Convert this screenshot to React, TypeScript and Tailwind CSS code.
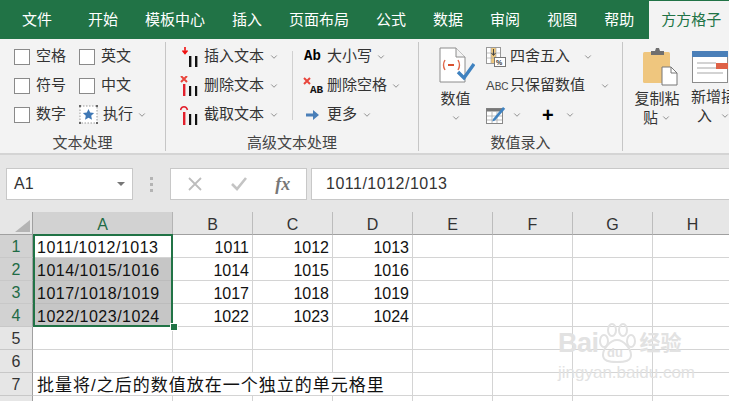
import { ChevronDown } from "lucide-react";

const FONT = '"Liberation Sans", "Noto Sans CJK SC", sans-serif';

const TABS = ["开始", "模板中心", "插入", "页面布局", "公式", "数据", "审阅", "视图", "帮助"];
const COLS = ["B", "C", "D", "E", "F", "G", "H"];

const ROWS = [
  { a: "1011/1012/1013", b: "1011", c: "1012", d: "1013" },
  { a: "1014/1015/1016", b: "1014", c: "1015", d: "1016" },
  { a: "1017/1018/1019", b: "1017", c: "1018", d: "1019" },
  { a: "1022/1023/1024", b: "1022", c: "1023", d: "1024" },
  { a: "", b: "", c: "", d: "" },
  { a: "", b: "", c: "", d: "" },
  { a: "批量将/之后的数值放在一个独立的单元格里", b: "", c: "", d: "" },
  { a: "", b: "", c: "", d: "" },
];

function Chev({ className = "" }: { className?: string }) {
  return <ChevronDown size={10} strokeWidth={1.5} className={`text-[#555] shrink-0 ${className}`} />;
}

function Check({ label }: { label: string }) {
  return (
    <div className="flex items-center h-[29px] gap-[6px]">
      <div className="w-4 h-4 border border-[#8a8a8a] bg-white" />
      <span>{label}</span>
    </div>
  );
}

function InsertIcon() {
  return (
    <svg width="20" height="20" viewBox="0 0 20 20" className="shrink-0">
      <path d="M5 0v6M2.500 3.500L5 6.500l2.500-3" stroke="#f01010" strokeWidth="1.6" fill="none" />
      <rect x="9" y="9" width="2.4" height="11" fill="#111" />
      <rect x="15" y="9" width="2.4" height="11" fill="#111" />
    </svg>
  );
}

function DeleteIcon() {
  return (
    <svg width="20" height="20" viewBox="0 0 20 20" className="shrink-0">
      <path d="M1 0l6 6M7 0L1 6" stroke="#e8453c" strokeWidth="2" />
      <rect x="3" y="8" width="2.4" height="12" fill="#e2202c" />
      <rect x="9" y="10" width="2.2" height="10" fill="#111" />
      <rect x="15" y="10" width="2.2" height="10" fill="#111" />
    </svg>
  );
}

function CutIcon() {
  return (
    <svg width="20" height="20" viewBox="0 0 20 20" className="shrink-0">
      <path d="M0.500 5C1.500 0.500 6.500 0.500 7.500 5" stroke="#e2202c" strokeWidth="1.5" fill="none" />
      <rect x="3" y="7" width="2.4" height="13" fill="#e2202c" />
      <rect x="9" y="9" width="2.2" height="11" fill="#111" />
      <rect x="15" y="9" width="2.2" height="11" fill="#111" />
    </svg>
  );
}

function StarIcon() {
  return (
    <svg width="19" height="19" viewBox="0 0 19 19" className="shrink-0">
      <rect x="1" y="1" width="17" height="17" fill="#fff" stroke="#999" strokeDasharray="1.5 1.5" />
      <rect x="0" y="0" width="2" height="2" fill="#666" />
      <rect x="17" y="0" width="2" height="2" fill="#666" />
      <rect x="0" y="17" width="2" height="2" fill="#666" />
      <rect x="17" y="17" width="2" height="2" fill="#666" />
      <path d="M9.500 4l1.700 3.600 3.900.5-2.900 2.700.8 3.900-3.500-2-3.500 2 .8-3.900-2.900-2.700 3.900-.5z" fill="#3f78b5" />
    </svg>
  );
}

function ValueIcon() {
  return (
    <svg width="36" height="36" viewBox="0 0 36 36" className="shrink-0 ml-[3px]">
      <path d="M1 1h16l9 9v25H1z" fill="#fff" stroke="#8c8c8c" />
      <path d="M17 1v9h9" fill="#f3f3f3" stroke="#8c8c8c" />
      <path d="M6 13q-3 5 0 10M19 13q3 5 0 10" stroke="#e0684b" strokeWidth="1.4" fill="none" />
      <path d="M9 18h6" stroke="#d9502e" strokeWidth="2" />
      <path d="M19 25l6 6L35 17" stroke="#3f82c0" strokeWidth="3.4" fill="none" />
    </svg>
  );
}

function RoundIcon() {
  return (
    <svg width="20" height="20" viewBox="0 0 20 20" className="shrink-0">
      <rect x="0.500" y="0.500" width="14" height="16" fill="#fff" stroke="#999" />
      <rect x="5" y="1" width="5" height="15" fill="#f0c87c" />
      <path d="M5 1v15M10 1v15M1 6h13M1 11h13" stroke="#aaa" strokeWidth="0.7" />
      <path d="M7.500 2v6M5.500 6l2 2.500 2-2.500" stroke="#444" strokeWidth="1" fill="none" />
      <rect x="8.500" y="10.500" width="11" height="9" fill="#fff" stroke="#777" />
      <text x="10" y="18" fontSize="7" fontWeight="700" fill="#333" fontFamily="Liberation Sans">%</text>
    </svg>
  );
}

function TableEditIcon() {
  return (
    <svg width="20" height="20" viewBox="0 0 20 20" className="shrink-0">
      <rect x="0.500" y="3.500" width="16" height="15" fill="#fff" stroke="#888" />
      <rect x="0.500" y="3.500" width="16" height="3" fill="#777" />
      <path d="M6 7v11M11 7v11M1 11h15M1 15h15" stroke="#aaa" strokeWidth="0.8" />
      <path d="M7 14L17 2l2.200 1.800L9 15.600l-2.600.8z" fill="#3f82c0" />
    </svg>
  );
}

function PasteIcon() {
  return (
    <svg width="36" height="38" viewBox="0 0 36 38" className="shrink-0 ml-[8px]">
      <rect x="0" y="4" width="27" height="31" rx="1.5" fill="#efc67e" />
      <path d="M8 7V3h4l1-3h3l1 3h4v4z" fill="#6f6f6f" />
      <path d="M19 19h9l6 6v12H19z" fill="#fff" stroke="#777" />
      <path d="M28 19v6h6" fill="none" stroke="#777" />
    </svg>
  );
}

function InsertRowIcon() {
  return (
    <svg width="36" height="32" viewBox="0 0 36 32" className="shrink-0 ml-[1px]">
      <rect x="0.500" y="0.500" width="35" height="31" fill="#fff" stroke="#8c8c8c" />
      <rect x="0" y="0" width="36" height="6" fill="#4a7fb8" />
      <path d="M5 12h19M5 17h19M5 22h26" stroke="#a8a8a8" strokeWidth="1.2" />
      <rect x="24" y="12" width="12" height="6" fill="#de6247" />
    </svg>
  );
}

function Group({ label, className, children }: { label: string; className: string; children: React.ReactNode }) {
  return (
    <div className={`flex flex-col shrink-0 border-r border-[#c6c6c6] ${className}`}>
      <div className="flex h-[87px]">{children}</div>
      <div className="mt-[4px] h-[20px] leading-[20px] text-center text-[#444]">{label}</div>
    </div>
  );
}

function Ribbon() {
  return (
    <div className="flex h-[116px] pt-[3px] pb-[2px] bg-[#f3f3f3] border-b-2 border-[#d4d4d4] overflow-hidden text-[15px] text-[#333]">
      <Group label="文本处理" className="w-[166px]">
        <div className="flex flex-col pl-[14px] w-[79px]">
          <Check label="空格" />
          <Check label="符号" />
          <Check label="数字" />
        </div>
        <div className="flex flex-col">
          <Check label="英文" />
          <Check label="中文" />
          <div className="flex items-center h-[29px]">
            <StarIcon />
            <span className="ml-[5px]">执行</span>
            <Chev className="ml-[4px]" />
          </div>
        </div>
      </Group>

      <Group label="高级文本处理" className="w-[253px]">
        <div className="flex flex-col pl-[14px] w-[126px] shrink-0">
          <div className="flex items-center h-[29px] gap-[4px]"><InsertIcon /><span>插入文本</span><Chev className="ml-[1px]" /></div>
          <div className="flex items-center h-[29px] gap-[4px]"><DeleteIcon /><span>删除文本</span><Chev className="ml-[1px]" /></div>
          <div className="flex items-center h-[29px] gap-[4px]"><CutIcon /><span>截取文本</span><Chev className="ml-[1px]" /></div>
        </div>
        <div className="w-px h-[69px] self-center bg-[#d0d0d0] shrink-0" />
        <div className="flex flex-col pl-[10px]">
          <div className="flex items-center h-[29px]">
            <span className="w-[23px] ml-[1px] text-[14px] font-bold text-black" style={{ fontFamily: '"Liberation Mono", monospace' }}>Ab</span>
            <span>大小写</span>
            <Chev className="ml-[4px]" />
          </div>
          <div className="flex items-center h-[29px] relative">
            <svg width="24" height="20" viewBox="0 0 24 20" className="shrink-0">
              <path d="M1 2l6 6M7 2L1 8" stroke="#e8453c" strokeWidth="2" />
              <text x="7" y="17" fontSize="11" fontWeight="700" fill="#111" fontFamily="Liberation Mono">AB</text>
            </svg>
            <span>删除空格</span>
            <Chev className="ml-[4px]" />
          </div>
          <div className="flex items-center h-[29px]">
            <svg width="24" height="14" viewBox="0 0 24 14" className="shrink-0">
              <path d="M3 5.500h7V2l6 5-6 5V8.500H3z" fill="#4a7fb8" />
            </svg>
            <span>更多</span>
            <Chev className="ml-[5px]" />
          </div>
        </div>
      </Group>

      <Group label="数值录入" className="w-[204px]">
        <div className="flex flex-col items-center w-[67px] pl-[6px] pt-[5px]">
          <ValueIcon />
          <span className="mt-[6px] leading-[20px]">数值</span>
          <Chev className="mt-[4px]" />
        </div>
        <div className="flex flex-col">
          <div className="flex items-center h-[29px] gap-[4px]"><RoundIcon /><span>四舍五入</span><Chev className="ml-[9px]" /></div>
          <div className="flex items-center h-[29px] gap-[4px]">
            <span className="w-[20px] text-[13px] text-[#444] whitespace-nowrap">A<span className="text-[10px]">BC</span></span>
            <span>只保留数值</span>
            <Chev className="ml-[11px]" />
          </div>
          <div className="flex items-center h-[29px]">
            <TableEditIcon />
            <Chev className="ml-[6px]" />
            <span className="ml-[20px] w-[14px] text-[20px] font-bold text-black leading-none">+</span>
            <Chev className="ml-[9px]" />
          </div>
        </div>
      </Group>

      <div className="flex">
        <div className="flex flex-col items-center w-[65px] pt-[6px] pl-[3px] leading-[19px] shrink-0">
          <PasteIcon />
          <span className="mt-[3px] whitespace-nowrap">复制粘</span>
          <span className="flex items-center">贴<Chev className="ml-[3px]" /></span>
        </div>
        <div className="flex flex-col w-[45px] pt-[9px] pl-[3px] leading-[19px] shrink-0">
          <InsertRowIcon />
          <span className="mt-[4px] whitespace-nowrap">新增插</span>
          <span className="flex items-center pl-[6px]">入<Chev className="ml-[8px]" /></span>
        </div>
      </div>
    </div>
  );
}

function FormulaBar() {
  return (
    <div className="flex items-center h-[57px] pt-[1px] pl-[6px] bg-[#e6e6e6] overflow-hidden">
      <div className="flex items-center justify-between shrink-0 w-[127px] h-[32px] pl-[7px] pr-[7px] bg-white border border-[#c8c8c8] text-[16px] text-[#333]">
        A1
        <div className="w-0 h-0 border-x-[4px] border-x-transparent border-t-[4px] border-t-[#777]" />
      </div>
      <div className="flex flex-col shrink-0 gap-[3px] ml-[17px] mr-[17px]">
        <div className="w-[3px] h-[3px] bg-[#b4b4b4]" />
        <div className="w-[3px] h-[3px] bg-[#b4b4b4]" />
        <div className="w-[3px] h-[3px] bg-[#b4b4b4]" />
      </div>
      <div className="flex items-center justify-around shrink-0 w-[137px] h-[32px] px-[2px] bg-white border border-[#c8c8c8]">
        <svg width="16" height="16" viewBox="0 0 16 16"><path d="M2 2l12 12M14 2L2 14" stroke="#bdbdbd" strokeWidth="1.8" /></svg>
        <svg width="18" height="16" viewBox="0 0 18 16"><path d="M2 8l5 5L16 2" stroke="#c4c4c4" strokeWidth="2.6" fill="none" /></svg>
        <span className="text-[18px] italic font-bold text-[#777]" style={{ fontFamily: '"Liberation Serif", serif' }}>fx</span>
      </div>
      <div className="flex items-center shrink-0 w-[500px] h-[32px] ml-[4px] pl-[14px] bg-white border border-[#c8c8c8] text-[16px] tracking-[0.5px] text-[#333]">
        1011/1012/1013
      </div>
    </div>
  );
}

function Sheet() {
  return (
    <div className="relative grid grid-cols-[33px_140px_repeat(7,80px)] text-[16px] text-[#111]">
      <div className="h-[23px] pt-[8px] pl-[15px] bg-[#e6e6e6] border-r border-b border-[#a0a0a0]">
        <div className="w-[15px] h-[12px] bg-[#b4b4b4] [clip-path:polygon(100%_0,100%_100%,0_100%)]" />
      </div>
      <div className="h-[23px] leading-[25px] text-center bg-[#d2d2d2] border-r border-b border-b-[#a0a0a0] border-r-[#b4b4b4] text-[#1f6b45]">A</div>
      {COLS.map((col) => (
        <div key={col} className="h-[23px] leading-[25px] text-center bg-[#e6e6e6] border-r border-b border-b-[#a0a0a0] border-r-[#bcbcbc] text-[#333]">
          {col}
        </div>
      ))}

      {ROWS.map((row, i) => (
        <div key={i} className="contents">
          <div className={`h-[23px] leading-[24px] text-center border-r border-b border-r-[#a0a0a0] border-b-[#c8c8c8] ${i < 4 ? "bg-[#d2d2d2] text-[#1f6b45]" : "bg-[#e6e6e6] text-[#333]"}`}>
            {i < 7 ? i + 1 : ""}
          </div>
          <div className={`h-[23px] leading-[25px] pl-[4px] whitespace-nowrap border-r border-b border-[#d4d4d4] ${i > 0 && i < 4 ? "bg-[#c6c6c6] border-b-[#bcbcbc]" : "bg-white"} ${i === 6 ? "border-r-0 tracking-[1px] text-[17px]" : "tracking-[0.5px]"}`}>
            {row.a}
          </div>
          {COLS.map((col, j) => {
            const val = j === 0 ? row.b : j === 1 ? row.c : j === 2 ? row.d : "";
            return (
              <div key={col} className={`h-[23px] leading-[25px] pr-[3px] text-right border-r border-b border-[#d4d4d4] ${i === 6 && j < 2 ? "border-r-0" : ""}`}>
                {val}
              </div>
            );
          })}
        </div>
      ))}

      {/* selection box */}
      <div className="absolute left-[33px] top-[22px] w-[140px] h-[93px] border-2 border-[#217346]" />
      <div className="absolute left-[170px] top-[111px] w-[6px] h-[6px] bg-[#217346] border border-white box-content" />

      {/* watermark */}
      <div className="absolute left-[558px] top-[110px] w-[135px] text-[#e2e2e2] pointer-events-none">
        <div className="flex items-center h-[42px] font-bold">
          <span className="text-[27px] tracking-[-0.5px]" style={{ fontFamily: '"Liberation Sans", sans-serif' }}>Bai</span>
          <svg width="38" height="44" viewBox="0 0 38 44" className="-ml-[1px] shrink-0">
            <ellipse cx="6" cy="20" rx="4" ry="6" fill="none" stroke="#e2e2e2" strokeWidth="2" />
            <ellipse cx="14" cy="9" rx="4" ry="6" fill="none" stroke="#e2e2e2" strokeWidth="2" />
            <ellipse cx="25" cy="9" rx="4" ry="6" fill="none" stroke="#e2e2e2" strokeWidth="2" />
            <ellipse cx="33" cy="20" rx="4" ry="6" fill="none" stroke="#e2e2e2" strokeWidth="2" />
            <path d="M19 19c-7 0-14 9-14 15 0 6 6 7 14 7s14-1 14-7c0-6-7-15-14-15z" fill="none" stroke="#e2e2e2" strokeWidth="2" />
            <text x="9" y="36" fontSize="13" fontWeight="700" fill="#e2e2e2" fontFamily="Liberation Sans">du</text>
          </svg>
          <span className="ml-[4px] text-[21px] whitespace-nowrap">经验</span>
        </div>
        <div className="mt-[1px] text-[17px] leading-[16px] whitespace-nowrap">jingyan.baidu.com</div>
      </div>
    </div>
  );
}

export default function App() {
  return (
    <div className="w-[729px] h-[401px] overflow-hidden bg-white" style={{ fontFamily: FONT }}>
      <div className="flex items-end h-[39px] bg-[#217346] text-[15px] text-white">
        <div className="h-[38px] leading-[38px] pl-[22px] pr-[21px] mr-[3px] shrink-0 whitespace-nowrap">文件</div>
        <div className="flex gap-[3px] shrink-0">
          {TABS.map((t) => (
            <div key={t} className="h-[38px] leading-[38px] px-[12px] whitespace-nowrap">{t}</div>
          ))}
        </div>
        <div className="h-[38px] leading-[38px] ml-[3px] pl-[12px] pr-[8px] bg-[#f3f3f3] text-[#217346] whitespace-nowrap shrink-0">方方格子</div>
      </div>
      <Ribbon />
      <FormulaBar />
      <Sheet />
    </div>
  );
}
